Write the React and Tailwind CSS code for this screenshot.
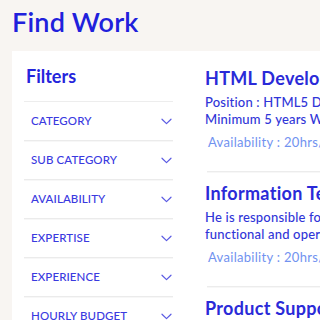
import React from "react";

const filters = ["CATEGORY", "SUB CATEGORY", "AVAILABILITY", "EXPERTISE", "EXPERIENCE", "HOURLY BUDGET"];

const jobs = [
  { title: "HTML Developer", lines: ["Position : HTML5 Developer", "Minimum 5 years Work Experience"] },
  { title: "Information Technology", lines: ["He is responsible for keeping", "functional and operational"] },
  { title: "Product Support", lines: ["Responsible for product support", "and customer care"] },
];

function Chevron() {
  return (
    <svg width="11" height="7" viewBox="0 0 11 7" fill="none" className="shrink-0">
      <path d="M1 1.2 L5.5 5.6 L10 1.2" stroke="#5b5be3" strokeWidth="1.2" strokeLinecap="round" strokeLinejoin="round" />
    </svg>
  );
}

export default function App() {
  return (
    <div className="w-[320px] h-[320px] overflow-hidden bg-[#f8f5f2] font-['Lato',sans-serif]">
      <h1 className="h-[51px] pl-[12px] pt-[8px] text-[27px] font-semibold leading-none tracking-[0.2px] text-[#2020dc] whitespace-nowrap">
        Find Work
      </h1>
      <div className="ml-[12px] flex bg-white h-[400px]">
        <div className="w-[149px] ml-[12px] shrink-0">
          <div className="pl-[2px] pt-[15px] pb-[15px] text-[18px] font-bold leading-[20px] text-[#2424dc]">Filters</div>
          <div className="border-t border-[#ededed]">
            {filters.map((f) => (
              <div
                key={f}
                className="h-[39px] flex items-center justify-between pl-[7px] pr-[1px] border-b border-[#ebebeb] shadow-[0_1px_0_#f7f7f7] text-[11.5px] font-medium tracking-[0.1px] text-[#3a3adf] whitespace-nowrap"
              >
                <span>{f}</span>
                <Chevron />
              </div>
            ))}
          </div>
        </div>
        <div className="ml-[32px] flex-1 min-w-0 whitespace-nowrap">
          {jobs.map((j, i) => (
            <div key={j.title} className={i === 0 ? "pt-[16px]" : "pt-[10px]"}>
              <div className="text-[18px] font-bold leading-[22px] tracking-[0.3px] text-[#2a2ad8]">{j.title}</div>
              <div className="mt-[5px] text-[13px] font-medium leading-[17px] tracking-[0.2px] text-[#3035d8]">
                {j.lines.map((l) => (
                  <div key={l}>{l}</div>
                ))}
              </div>
              <div className="mt-[6px] pl-[3px] text-[13px] leading-[17px] tracking-[0.3px] text-[#7192f0]">
                Availability : 20hrs/week
              </div>
              <div className="mt-[20px] ml-[2px] border-t border-[#ececec] shadow-[0_1px_0_#f7f7f7]" />
            </div>
          ))}
        </div>
      </div>
    </div>
  );
}
